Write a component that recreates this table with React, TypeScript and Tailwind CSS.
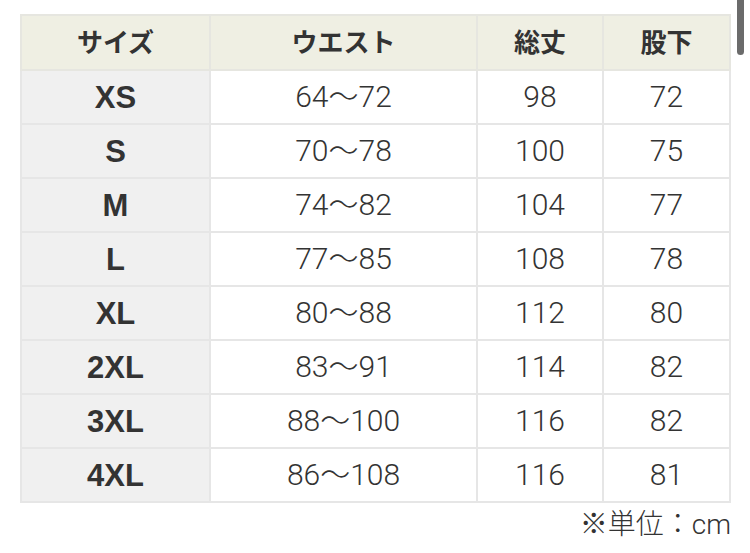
import React from "react";

const rows = [
    ["XS", "64〜72", "98", "72"],
    ["S", "70〜78", "100", "75"],
    ["M", "74〜82", "104", "77"],
    ["L", "77〜85", "108", "78"],
    ["XL", "80〜88", "112", "80"],
    ["2XL", "83〜91", "114", "82"],
    ["3XL", "88〜100", "116", "82"],
    ["4XL", "86〜108", "116", "81"],
];

const headers = ["サイズ", "ウエスト", "総丈", "股下"];

const jp = '"Noto Sans CJK JP", "Noto Sans", sans-serif';
const num = 'Roboto, "Noto Sans CJK JP", sans-serif';
const label = '"Liberation Sans", "Noto Sans CJK JP", sans-serif';

export default function App() {
    return (
        <div
            className="relative w-[750px] h-[553px] bg-white overflow-hidden text-[#333]"
            style={{ fontFamily: jp }}
        >
            <div className="pl-[20px] pt-[14px] w-[731px]">
                <table className="w-[709px] border-collapse table-fixed">
                    <colgroup>
                        <col className="w-[189px]" />
                        <col className="w-[267px]" />
                        <col className="w-[126px]" />
                        <col className="w-[127px]" />
                    </colgroup>
                    <thead>
                        <tr className="h-[55px] bg-[#efefe3]">
                            {headers.map((h) => (
                                <th key={h} className="border-2 border-[#e6e6e0] text-[26px] font-bold text-center leading-none pb-[3px]">
                                    {h}
                                </th>
                            ))}
                        </tr>
                    </thead>
                    <tbody>
                        {rows.map((r) => (
                            <tr key={r[0]} className="h-[54px]">
                                <td
                                    className="border-2 border-[#e6e6e6] bg-[#f0f0f0] text-center text-[31px] font-bold leading-none"
                                    style={{ fontFamily: label }}
                                >
                                    {r[0]}
                                </td>
                                {r.slice(1).map((v, i) => (
                                    <td
                                        key={i}
                                        className="border-2 border-[#e6e6e6] text-center text-[30px] font-light leading-none"
                                        style={{ fontFamily: num }}
                                    >
                                        {v}
                                    </td>
                                ))}
                            </tr>
                        ))}
                    </tbody>
                </table>
                <div
                    className="flex justify-end pt-[8px] text-[28px] font-light leading-none"
                    style={{ fontFamily: num }}
                >
                    ※単位：cm
                </div>
            </div>
            {/* overlay scrollbar */}
            <div className="absolute right-[6px] top-0 w-[7px] h-[55px] rounded-b-full bg-[#6b6b6b]" />
        </div>
    );
}
